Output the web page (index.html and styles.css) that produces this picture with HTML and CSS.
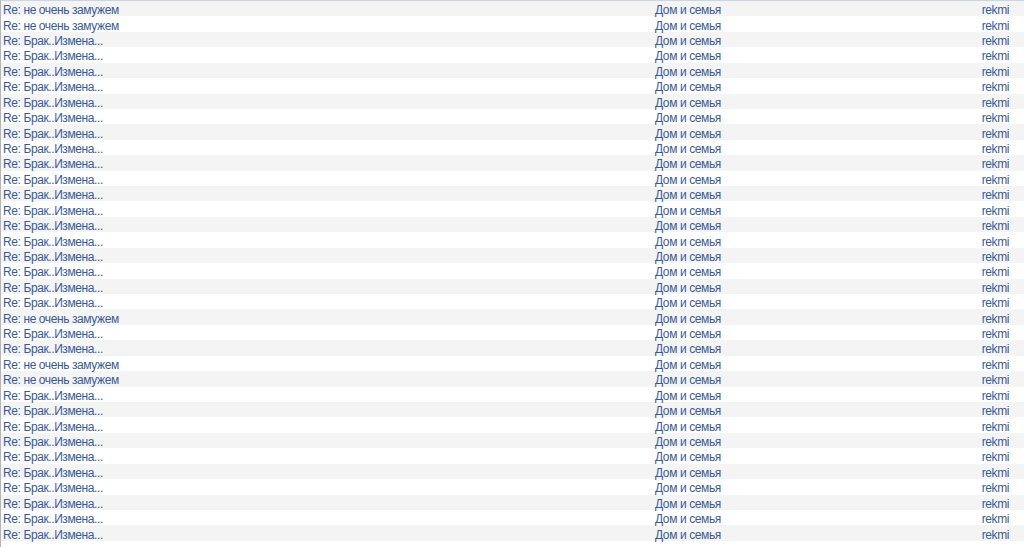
FILE: index.html
```html
<!DOCTYPE html>
<html lang="ru">
<head>
<meta charset="utf-8">
<title>Темы</title>
<link rel="stylesheet" href="styles.css">
</head>
<body>
<div class="list">
<table class="topics">
<tbody>
<tr><td class="t">Re: не очень замужем</td><td class="c">Дом и семья</td><td class="a">rekmi</td></tr>
<tr><td class="t">Re: не очень замужем</td><td class="c">Дом и семья</td><td class="a">rekmi</td></tr>
<tr><td class="t">Re: Брак..Измена...</td><td class="c">Дом и семья</td><td class="a">rekmi</td></tr>
<tr><td class="t">Re: Брак..Измена...</td><td class="c">Дом и семья</td><td class="a">rekmi</td></tr>
<tr><td class="t">Re: Брак..Измена...</td><td class="c">Дом и семья</td><td class="a">rekmi</td></tr>
<tr><td class="t">Re: Брак..Измена...</td><td class="c">Дом и семья</td><td class="a">rekmi</td></tr>
<tr><td class="t">Re: Брак..Измена...</td><td class="c">Дом и семья</td><td class="a">rekmi</td></tr>
<tr><td class="t">Re: Брак..Измена...</td><td class="c">Дом и семья</td><td class="a">rekmi</td></tr>
<tr><td class="t">Re: Брак..Измена...</td><td class="c">Дом и семья</td><td class="a">rekmi</td></tr>
<tr><td class="t">Re: Брак..Измена...</td><td class="c">Дом и семья</td><td class="a">rekmi</td></tr>
<tr><td class="t">Re: Брак..Измена...</td><td class="c">Дом и семья</td><td class="a">rekmi</td></tr>
<tr><td class="t">Re: Брак..Измена...</td><td class="c">Дом и семья</td><td class="a">rekmi</td></tr>
<tr><td class="t">Re: Брак..Измена...</td><td class="c">Дом и семья</td><td class="a">rekmi</td></tr>
<tr><td class="t">Re: Брак..Измена...</td><td class="c">Дом и семья</td><td class="a">rekmi</td></tr>
<tr><td class="t">Re: Брак..Измена...</td><td class="c">Дом и семья</td><td class="a">rekmi</td></tr>
<tr><td class="t">Re: Брак..Измена...</td><td class="c">Дом и семья</td><td class="a">rekmi</td></tr>
<tr><td class="t">Re: Брак..Измена...</td><td class="c">Дом и семья</td><td class="a">rekmi</td></tr>
<tr><td class="t">Re: Брак..Измена...</td><td class="c">Дом и семья</td><td class="a">rekmi</td></tr>
<tr><td class="t">Re: Брак..Измена...</td><td class="c">Дом и семья</td><td class="a">rekmi</td></tr>
<tr><td class="t">Re: Брак..Измена...</td><td class="c">Дом и семья</td><td class="a">rekmi</td></tr>
<tr><td class="t">Re: не очень замужем</td><td class="c">Дом и семья</td><td class="a">rekmi</td></tr>
<tr><td class="t">Re: Брак..Измена...</td><td class="c">Дом и семья</td><td class="a">rekmi</td></tr>
<tr><td class="t">Re: Брак..Измена...</td><td class="c">Дом и семья</td><td class="a">rekmi</td></tr>
<tr><td class="t">Re: не очень замужем</td><td class="c">Дом и семья</td><td class="a">rekmi</td></tr>
<tr><td class="t">Re: не очень замужем</td><td class="c">Дом и семья</td><td class="a">rekmi</td></tr>
<tr><td class="t">Re: Брак..Измена...</td><td class="c">Дом и семья</td><td class="a">rekmi</td></tr>
<tr><td class="t">Re: Брак..Измена...</td><td class="c">Дом и семья</td><td class="a">rekmi</td></tr>
<tr><td class="t">Re: Брак..Измена...</td><td class="c">Дом и семья</td><td class="a">rekmi</td></tr>
<tr><td class="t">Re: Брак..Измена...</td><td class="c">Дом и семья</td><td class="a">rekmi</td></tr>
<tr><td class="t">Re: Брак..Измена...</td><td class="c">Дом и семья</td><td class="a">rekmi</td></tr>
<tr><td class="t">Re: Брак..Измена...</td><td class="c">Дом и семья</td><td class="a">rekmi</td></tr>
<tr><td class="t">Re: Брак..Измена...</td><td class="c">Дом и семья</td><td class="a">rekmi</td></tr>
<tr><td class="t">Re: Брак..Измена...</td><td class="c">Дом и семья</td><td class="a">rekmi</td></tr>
<tr><td class="t">Re: Брак..Измена...</td><td class="c">Дом и семья</td><td class="a">rekmi</td></tr>
<tr><td class="t">Re: Брак..Измена...</td><td class="c">Дом и семья</td><td class="a">rekmi</td></tr>
</tbody>
</table>
</div>
</body>
</html>
```

FILE: styles.css
```css
html, body {
  margin: 0;
  padding: 0;
  background: #ffffff;
}

.list {
  height: 547px;
  box-sizing: border-box;
  border-top: 1px solid #cbd6e2;
  border-left: 1px solid #b4b4b4;
  overflow: hidden;
}

.topics {
  width: 100%;
  border-collapse: collapse;
  font-family: "Liberation Sans", Arial, sans-serif;
  font-size: 12px;
  letter-spacing: -0.4px;
  color: #3a5a96;
}

.topics tr {
  height: 15.43px;
}

.topics tr:nth-child(odd) {
  background: #f4f4f4;
}

.topics td {
  padding: 0;
  padding-top: 3px;
  line-height: 12px;
  white-space: nowrap;
}

.topics .t {
  padding-left: 2px;
  width: 652px;
}

.topics .c {
  text-align: left;
}

.topics .a {
  text-align: right;
  padding-right: 15px;
}
```
